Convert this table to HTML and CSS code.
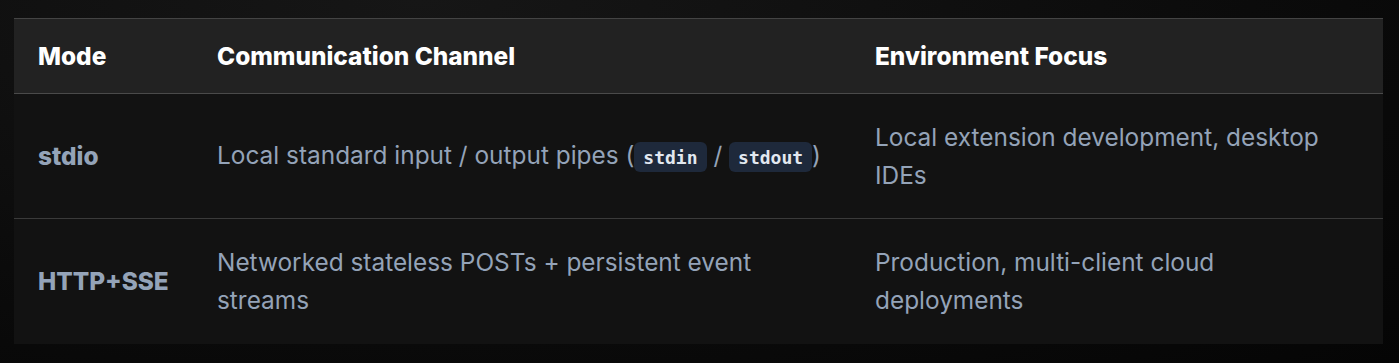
FILE: index.html
```html
<!DOCTYPE html>
<html lang="en">

<head>
    <meta charset="UTF-8">
    <meta name="viewport" content="width=device-width, initial-scale=1.0">
    <title>Transport Modes</title>
    <link rel="stylesheet" href="styles.css">
</head>

<body>
    <div class="wrap">
        <table class="modes">
            <thead>
                <tr>
                    <th class="col-mode">Mode</th>
                    <th class="col-channel">Communication Channel</th>
                    <th class="col-env">Environment Focus</th>
                </tr>
            </thead>
            <tbody>
                <tr>
                    <td class="mode">stdio</td>
                    <td>Local standard input / output pipes (<code>stdin</code> / <code>stdout</code>)</td>
                    <td>Local extension development, desktop IDEs</td>
                </tr>
                <tr class="last">
                    <td class="mode">HTTP+SSE</td>
                    <td>Networked stateless POSTs + persistent event streams</td>
                    <td>Production, multi-client cloud deployments</td>
                </tr>
            </tbody>
        </table>
    </div>
</body>

</html>
```

FILE: styles.css
```css
body {
    margin: 0;
    font-family: Inter, "Noto Sans", sans-serif;
    background-color: #0b0b0b;
    background-image: radial-gradient(ellipse at 30% 0%, #161616 0%, #0b0b0b 60%, #050505 100%);
    min-height: 100vh;
}

.wrap {
    padding: 18px 16px 0 14px;
}

.modes {
    width: 100%;
    border-collapse: collapse;
    font-size: 24.4px;
    line-height: 38px;
    color: #94a3b8;
}

.modes thead tr {
    background-color: #222222;
    border-top: 1px solid #444444;
    border-bottom: 1px solid #4a4a4a;
}

.modes th {
    text-align: left;
    color: #ffffff;
    font-weight: 800;
    padding: 18px 24px;
}

.col-mode {
    width: 131px;
}

.col-channel {
    width: 610px;
}

.modes tbody tr {
    background-color: #121212;
}

.modes tbody tr + tr {
    border-top: 1px solid #3a3a3a;
}

.modes td {
    padding: 24px;
    vertical-align: middle;
}

.modes tr.last td {
    padding-bottom: 25px;
}

.modes td.mode {
    font-weight: 800;
}

code {
    font-family: "DejaVu Sans Mono", monospace;
    font-size: 18px;
    font-weight: 600;
    color: #e2e8f0;
    background-color: #1e293b;
    border-radius: 6px;
    padding: 5px 9px 4px;
}
```
